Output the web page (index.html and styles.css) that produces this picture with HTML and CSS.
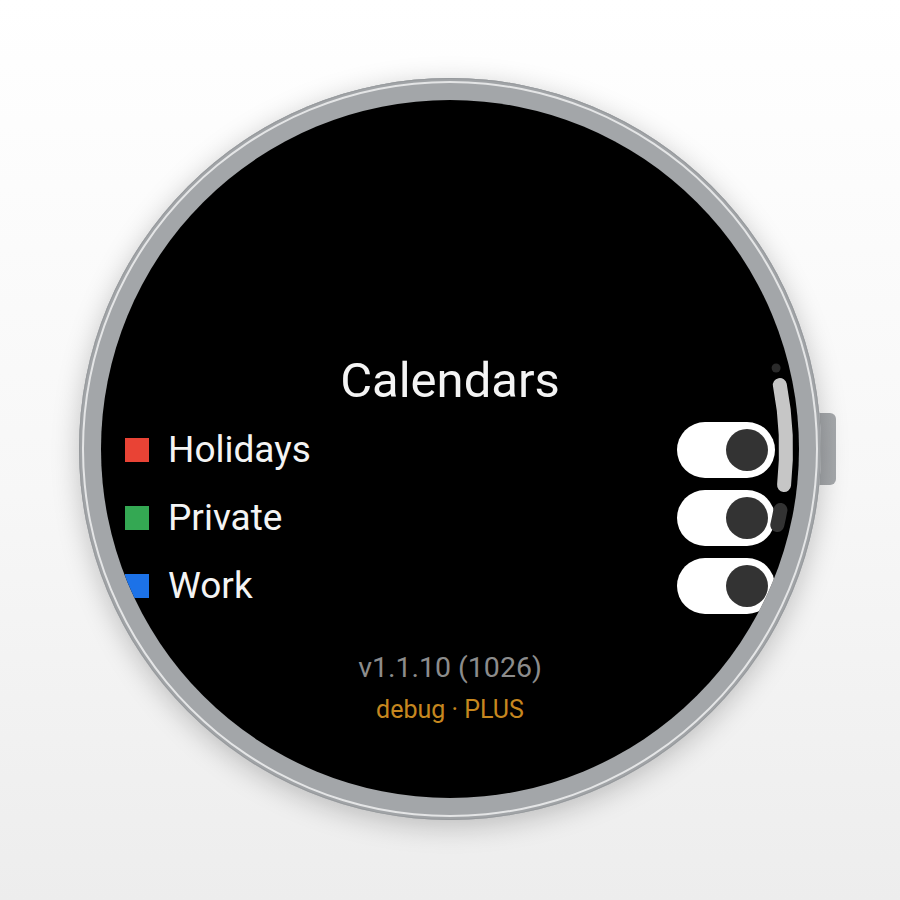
FILE: index.html
```html
<!DOCTYPE html>
<html lang="en">
<head>
<meta charset="utf-8">
<title>Calendars</title>
<link rel="stylesheet" href="styles.css">
</head>
<body>
<div class="stage">
  <div class="watch">
    <div class="crown"></div>
    <div class="screen">
      <div class="content">
        <h1 class="title">Calendars</h1>
        <ul class="list">
          <li class="row">
            <span class="label"><span class="swatch swatch-red"></span>Holidays</span>
            <span class="toggle"><span class="knob"></span></span>
          </li>
          <li class="row">
            <span class="label"><span class="swatch swatch-green"></span>Private</span>
            <span class="toggle"><span class="knob"></span></span>
          </li>
          <li class="row">
            <span class="label"><span class="swatch swatch-blue"></span>Work</span>
            <span class="toggle"><span class="knob"></span></span>
          </li>
        </ul>
        <div class="version">v1.1.10 (1026)</div>
        <div class="build">debug · PLUS</div>
      </div>
      <svg class="scrollbar" viewBox="0 0 698 698" width="698" height="698" aria-hidden="true">
        <circle cx="675.1" cy="268" r="4.5" fill="#2a2a2a"/>
        <path d="M 678.85 285 A 336 336 0 0 1 683.07 385" fill="none" stroke="#c6c6c6" stroke-width="14" stroke-linecap="round"/>
        <path d="M 679.42 410 A 336 336 0 0 1 676.3 424.98" fill="none" stroke="#333333" stroke-width="14" stroke-linecap="round"/>
      </svg>
    </div>
  </div>
</div>
</body>
</html>
```
FILE: styles.css
```css
html, body {
  margin: 0;
  padding: 0;
}
body {
  background: linear-gradient(to bottom, #ffffff 0%, #f7f7f7 55%, #ededed 100%);
  font-family: Roboto, "Liberation Sans", Arial, sans-serif;
}
.stage {
  width: 900px;
  height: 900px;
  display: flex;
  justify-content: center;
  align-items: flex-start;
  padding-top: 78px;
  box-sizing: border-box;
}
.watch {
  position: relative;
  width: 742px;
  height: 742px;
  box-sizing: border-box;
  padding: 22px;
  border-radius: 50%;
  background: #a3a6a9;
  box-shadow:
    inset 0 0 0 1px #979a9d,
    inset 0 0 0 3px #a1a4a7,
    inset 0 0 0 5px #e4e5e6,
    0 6px 28px rgba(0, 0, 0, 0.22);
}
.crown {
  position: absolute;
  left: 739px;
  top: 335px;
  width: 18px;
  height: 72px;
  background: linear-gradient(to right, #9a9da0 0px, #a4a7aa 3px, #a6a9ac 100%);
  border-radius: 0 6px 6px 0;
  z-index: -1;
}
.screen {
  position: relative;
  width: 698px;
  height: 698px;
  border-radius: 50%;
  background: #000;
  overflow: hidden;
}
.content {
  display: flex;
  flex-direction: column;
  align-items: stretch;
  padding: 253px 24px 0 24px;
}
.title {
  margin: 0;
  font-size: 49px;
  font-weight: 400;
  line-height: 56px;
  color: #f4f4f4;
  text-align: center;
}
.list {
  list-style: none;
  margin: 13px 0 0 0;
  padding: 0;
  display: flex;
  flex-direction: column;
  gap: 12px;
}
.row {
  height: 56px;
  display: flex;
  align-items: center;
  justify-content: space-between;
}
.label {
  display: flex;
  align-items: center;
  gap: 19px;
  font-size: 37px;
  line-height: 42px;
  color: #f4f4f4;
}
.swatch {
  width: 24px;
  height: 24px;
  flex: none;
}
.swatch-red { background: #e94335; }
.swatch-green { background: #34a853; }
.swatch-blue { background: #1c72e8; }
.toggle {
  width: 98px;
  height: 56px;
  box-sizing: border-box;
  padding: 7px;
  border-radius: 28px;
  background: #ffffff;
  display: flex;
  justify-content: flex-end;
  align-items: center;
}
.knob {
  width: 42px;
  height: 42px;
  border-radius: 50%;
  background: #333333;
}
.version {
  margin-top: 37px;
  font-size: 28.5px;
  line-height: 33px;
  color: #8c8c8c;
  text-align: center;
}
.build {
  margin-top: 12px;
  font-size: 25px;
  line-height: 28px;
  color: #c6871f;
  text-align: center;
}
.scrollbar {
  position: absolute;
  left: 0;
  top: 0;
}
```
